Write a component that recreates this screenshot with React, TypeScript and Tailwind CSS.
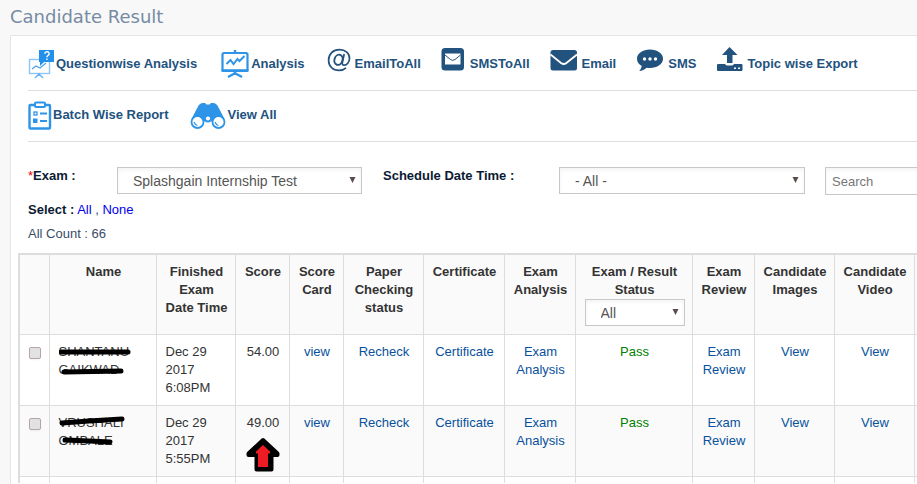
import type { ReactNode } from "react";

const actions = [
  { label: "Questionwise Analysis", icon: <QuestionBoardIcon />, space: "mr-6" },
  { label: "Analysis", icon: <BoardIcon />, space: "mr-[22px]" },
  { label: "EmailToAll", icon: <AtIcon />, space: "gap-1 mr-5" },
  { label: "SMSToAll", icon: <EnvelopeSquareIcon />, space: "gap-1 mr-5" },
  { label: "Email", icon: <EnvelopeIcon />, space: "gap-1 mr-5" },
  { label: "SMS", icon: <CommentIcon />, space: "gap-1 mr-5" },
  { label: "Topic wise Export", icon: <ExportIcon />, space: "gap-1" },
];

const reports = [
  { label: "Batch Wise Report", icon: <ClipboardIcon />, space: "mr-[22px]" },
  { label: "View All", icon: <BinocularsIcon />, space: "" },
];

const rows = [
  {
    first: "SHANTANU",
    last: "GAIKWAD",
    finished: ["Dec 29", "2017", "6:08PM"],
    score: "54.00",
    marks: ["M2 9 L69 9", "M5 29 L62 28"],
    flagged: false,
  },
  {
    first: "VRUSHALI",
    last: "OMBALE",
    finished: ["Dec 29", "2017", "5:55PM"],
    score: "49.00",
    marks: ["M3 9 L30 7 L63 5", "M6 26 L30 27 L51 28"],
    flagged: true,
  },
];

function QuestionBoardIcon() {
  return (
    <svg width="28" height="30" viewBox="0 0 28 30" fill="none">
      <rect x="1.5" y="10.5" width="20" height="14" stroke="#8cc6f8" strokeWidth="1.4" />
      <path d="M4 20l4-3 4 2 6-5" stroke="#4ba3ee" strokeWidth="1.2" />
      <path d="M11 24v3M11 25l-4 4M11 25l4 4" stroke="#63b1f2" strokeWidth="1.4" />
      <path d="M11 1h15v12H16l-4 4V13h-1z" fill="#2391ec" />
      <path d="M16.7 4.8q.3-2 2.200-2 2.200 0 2.200 1.900 0 1.200-1.300 1.900-.9.500-.9 1.700M18.900 9.500v1.500" stroke="#fff" strokeWidth="1.4" />
    </svg>
  );
}

function BoardIcon() {
  return (
    <svg width="30" height="30" viewBox="0 0 30 30" fill="none" stroke="#2e94e8">
      <rect x="1.500" y="4" width="25" height="18" rx="1.5" strokeWidth="2.200" />
      <path d="M.5 21.500h27" strokeWidth="2.6" />
      <path d="M14 1v3M14 22v4M13.500 24.500l-6.500 3.500M14.500 24.500l6.500 3.500" strokeWidth="2.400" />
      <path d="M5.500 15l4-4 3 4 4-5 2 2 5-5" strokeWidth="2" />
    </svg>
  );
}

function AtIcon() {
  return (
    <svg className="mb-2" width="24" height="24" viewBox="0 0 24 24" fill="none" stroke="#22527e">
      <path
        d="M19 19.800c-1.800 1.700-4.200 2.600-7 2.600C5.700 22.400 1.600 18 1.600 12.200 1.600 6.200 6 1.600 12.500 1.600c6 0 10 3.600 10 8.600 0 4.300-2.700 7-5.400 7-1.700 0-2.100-1.200-1.700-3L17.200 6"
        strokeWidth="1.7"
      />
      <ellipse cx="11.5" cy="11.800" rx="4" ry="5.200" transform="rotate(18 11.5 11.8)" strokeWidth="1.9" />
    </svg>
  );
}

function EnvelopeSquareIcon() {
  return (
    <svg className="mb-2.5" width="25" height="24" viewBox="0 0 25 24">
      <rect x=".5" y="1" width="22.500" height="22.500" rx="3.500" fill="#22527e" />
      <path d="M4 6.500h15.500v11H4z" fill="#fff" />
      <path d="M4 8l5.500 4.500q2.200 1.800 4.500 0L19.500 8" fill="none" stroke="#22527e" strokeWidth="1" />
    </svg>
  );
}

function EnvelopeIcon() {
  return (
    <svg className="mb-2" width="28" height="24" viewBox="0 0 28 24">
      <rect x=".5" y="2" width="26.500" height="20.500" rx="2.500" fill="#22527e" />
      <path d="M.5 6.500l10.500 8.500q2.700 2 5.400 0L27 6.500" fill="none" stroke="#fff" strokeWidth="1.8" />
    </svg>
  );
}

function CommentIcon() {
  return (
    <svg className="mb-2" width="28" height="24" viewBox="0 0 28 24">
      <path
        d="M14 1.500c7.200 0 13 4 13 9.200S21.200 20 14 20c-1.200 0-2.300-.1-3.400-.3-2 1.700-4.500 3.200-7.400 3.300 1.200-1.400 2.300-3 2.500-5C2.800 16.300 1 13.700 1 10.700 1 5.500 6.800 1.500 14 1.500z"
        fill="#22527e"
      />
      <g fill="#fff">
        <circle cx="8.500" cy="11" r="1.700" />
        <circle cx="14" cy="11" r="1.700" />
        <circle cx="19.500" cy="11" r="1.700" />
      </g>
    </svg>
  );
}

function ExportIcon() {
  return (
    <svg className="mb-2.5" width="27" height="24" viewBox="0 0 27 24" fill="#22527e">
      <path d="M13.500 0l8 8h-5v8h-5.500V8h-5z" />
      <path d="M2 17h7q.8 1.500 2.500 1.500h4q1.700 0 2.500-1.500h7.500q1 0 1 1v5q0 1-1 1h-23.500q-1 0-1-1v-5q0-1 1-1z" />
      <path d="M18 20.500h2v1.500h-2zM22 20.500h2v1.500h-2z" fill="#fff" />
    </svg>
  );
}

function ClipboardIcon() {
  return (
    <svg width="25" height="30" viewBox="0 0 25 30" fill="none" stroke="#2e94e8">
      <rect x="1.500" y="5" width="20.500" height="23.500" rx="1" strokeWidth="2.400" />
      <rect x="7" y="2.500" width="10" height="4.500" rx="1" fill="#fff" strokeWidth="2" />
      <rect x="6" y="12" width="3" height="3" strokeWidth="1.300" />
      <path d="M5 18.500h4.500V23H5z" fill="#2e94e8" stroke="none" />
      <path d="M12 13.500h7M12 21h7" strokeWidth="2" />
    </svg>
  );
}

function BinocularsIcon() {
  return (
    <svg width="37" height="30" viewBox="0 0 37 30">
      <path
        d="M8.500 5.500Q10 3 12.500 3h2.500l1.500 1.500h3L21 3h2.500q2.500 0 4 2.500L34 18l-6 8-7-5h-6l-7 5-6-8z"
        fill="#2e94e8"
      />
      <g fill="#fff" stroke="#2e94e8" strokeWidth="1.800">
        <circle cx="7.500" cy="22" r="6" />
        <circle cx="28.500" cy="22" r="6" />
        <circle cx="18" cy="18.500" r="3" />
      </g>
      <path d="M4 22q1 3 3.500 3.500M25 22q1 3 3.500 3.500" fill="none" stroke="#2e94e8" strokeWidth="1.200" />
    </svg>
  );
}

function Action({ label, icon, space }: { label: string; icon: ReactNode; space: string }) {
  return (
    <a href="#" className={`flex items-center font-bold text-[#22527e] whitespace-nowrap ${space}`}>
      {icon}
      {label}
    </a>
  );
}

function Select({ id, label, value }: { id: string; label?: string; value: string }) {
  return (
    <div className="relative">
      <select
        id={id}
        aria-label={label}
        className="block h-[27px] w-full appearance-none border border-[#c8c8c8] bg-white pl-[15px] text-sm font-normal text-[#555] shadow-inner"
      >
        <option>{value}</option>
      </select>
      <svg className="pointer-events-none absolute top-2.5 right-1.5" width="7" height="6" viewBox="0 0 7 6">
        <path d="M.5 0h6L3.500 6z" fill="#5c4b4b" />
      </svg>
    </div>
  );
}

function Th({ children }: { children?: ReactNode }) {
  return <th className="border border-[#ddd] py-2 pr-[7px] pl-[9px] align-top font-bold">{children}</th>;
}

function Td({ children }: { children?: ReactNode }) {
  return (
    <td className="border border-[#ddd] py-2 pr-[7px] pl-[9px] text-center align-top text-[#08519c]">{children}</td>
  );
}

export default function App() {
  return (
    <div className="min-h-screen overflow-hidden bg-[#f8f8f8] pl-2.5 font-['Liberation_Sans',Arial,sans-serif] text-[13px] leading-[18px] text-[#333]">
      <h1 className="h-[35px] pt-[5px] font-['DejaVu_Sans',Verdana,sans-serif] text-lg leading-6 text-[#768ba3]">
        Candidate Result
      </h1>

      <main className="min-h-[449px] border-t border-l border-[#e5e5e5] bg-white">
        <div className="pl-[17px]">
          <nav className="flex h-[55px] items-center border-b border-[#ddd] pt-0.5">
            {actions.map((item) => (
              <Action key={item.label} {...item} />
            ))}
          </nav>
          <nav className="flex h-[51px] items-center border-b border-[#ddd] pb-0.5">
            {reports.map((item) => (
              <Action key={item.label} {...item} />
            ))}
          </nav>

          <div className="mt-[25px] grid grid-cols-[89px_245px_21px_176px_246px_20px_200px]">
            <label htmlFor="exam" className="font-bold text-[#0b1a33]">
              <span className="font-normal text-red-600">*</span>Exam :
            </label>
            <Select id="exam" value="Splashgain Internship Test" />
            <label htmlFor="schedule" className="col-start-4 font-bold text-[#0b1a33]">
              Schedule Date Time :
            </label>
            <Select id="schedule" value="- All -" />
            <input
              type="text"
              aria-label="Search"
              placeholder="Search"
              className="col-start-7 h-7 border border-[#c8c8c8] px-1.5 shadow-inner placeholder:text-[#777]"
            />
          </div>

          <p className="mt-1.5 text-[#22527e]">
            <b className="text-[#0b1a33]">Select :</b>{" "}
            <a href="#" className="text-[#0000ee]">All</a> ,{" "}
            <a href="#" className="text-[#0000ee]">None</a>
          </p>
          <p className="mt-1.5 text-[#384d68]">All Count : 66</p>
        </div>

        <table className="mt-2.5 ml-[7px] w-[976px] table-fixed border-collapse border-2 border-b-0 border-[#ddd]">
          <colgroup>
            <col className="w-[30px]" />
            <col className="w-[107px]" />
            <col className="w-[79px]" />
            <col className="w-[54px]" />
            <col className="w-[54px]" />
            <col className="w-[80px]" />
            <col className="w-[81px]" />
            <col className="w-[71px]" />
            <col className="w-[117px]" />
            <col className="w-[62px]" />
            <col className="w-[80px]" />
            <col className="w-[80px]" />
            <col />
          </colgroup>
          <thead className="bg-[#fafafa]">
            <tr className="h-20">
              <Th />
              <Th>Name</Th>
              <Th>Finished Exam Date&nbsp;Time</Th>
              <Th>Score</Th>
              <Th>Score Card</Th>
              <Th>Paper Checking status</Th>
              <Th>Certificate</Th>
              <Th>Exam Analysis</Th>
              <Th>
                Exam / Result Status
                <Select id="status" label="Exam / Result Status" value="All" />
              </Th>
              <Th>Exam Review</Th>
              <Th>Candidate Images</Th>
              <Th>Candidate Video</Th>
              <Th />
            </tr>
          </thead>
          <tbody>
            {rows.map((row) => (
              <tr key={row.first} className="h-[71px] even:bg-[#fafafa]">
                <Td>
                  <input
                    type="checkbox"
                    aria-label={`${row.first} ${row.last}`}
                    className="mt-1 block size-3 appearance-none rounded-xs border border-[#b5a5a5] bg-[#e2e2e2] shadow-xs"
                  />
                </Td>
                <td className="border border-[#ddd] py-2 pr-[7px] pl-[9px] align-top">
                  <div className="relative">
                    {row.first}
                    <br />
                    {row.last}
                    <svg className="absolute top-0 left-0" width="74" height="36" viewBox="0 0 74 36">
                      {row.marks.map((d) => (
                        <path key={d} d={d} fill="none" stroke="#000" strokeWidth="5" strokeLinecap="round" />
                      ))}
                    </svg>
                  </div>
                </td>
                <td className="border border-[#ddd] py-2 pr-[7px] pl-[9px] align-top">
                  {row.finished.map((line) => (
                    <div key={line}>{line}</div>
                  ))}
                </td>
                <td className="border border-[#ddd] py-2 pr-[7px] pl-[9px] text-center align-top">
                  <div className="relative">
                    {row.score}
                    {row.flagged && (
                      <svg className="absolute top-5.5 left-0" width="36" height="36" viewBox="0 0 36 36">
                        <path
                          d="M18 4L32.500 17.500v1.500h-6V33.500H11.500V19H3.500v-1.500z"
                          fill="#000"
                          stroke="#000"
                          strokeWidth="4"
                          strokeLinejoin="round"
                        />
                        <path d="M18 9l7 6.500v2h-2V31h-10V17.500h-2v-2z" fill="#ed1c24" />
                      </svg>
                    )}
                  </div>
                </td>
                <Td><a href="#">view</a></Td>
                <Td><a href="#">Recheck</a></Td>
                <Td><a href="#">Certificate</a></Td>
                <Td><a href="#">Exam Analysis</a></Td>
                <Td><span className="text-[#008000]">Pass</span></Td>
                <Td><a href="#">Exam Review</a></Td>
                <Td><a href="#">View</a></Td>
                <Td><a href="#">View</a></Td>
                <Td />
              </tr>
            ))}
            <tr>
              {Array.from({ length: 13 }, (_, i) => (
                <td key={i} className="h-1.5 border-x border-[#ddd]" />
              ))}
            </tr>
          </tbody>
        </table>
      </main>
    </div>
  );
}
